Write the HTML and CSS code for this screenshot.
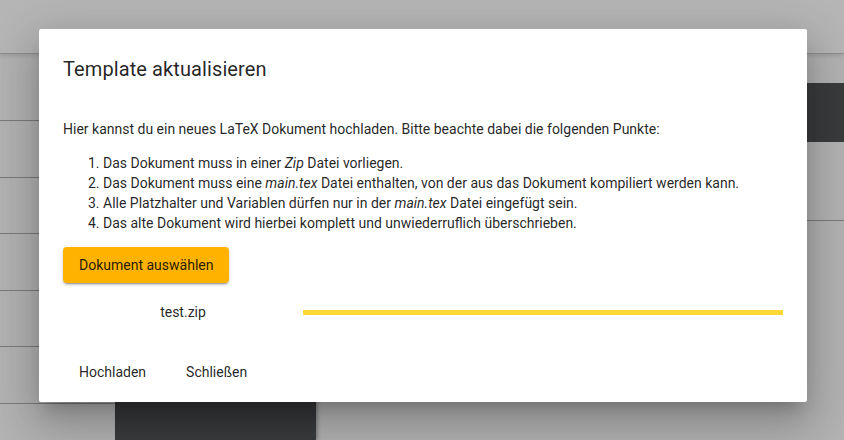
FILE: index.html
```html
<!DOCTYPE html>
<html lang="de">
<head>
<meta charset="utf-8">
<title>Template aktualisieren</title>
<link rel="stylesheet" href="styles.css">
</head>
<body>
<div class="app">
  <header class="toolbar"></header>
  <div class="main">
    <aside class="side">
      <div class="side-head"></div>
      <div class="side-row"></div>
      <div class="side-row"></div>
      <div class="side-row"></div>
      <div class="side-row"></div>
      <div class="side-row"></div>
    </aside>
    <section class="center">
      <div class="center-top"></div>
      <div class="center-dark"></div>
    </section>
    <section class="right">
      <div class="right-gap"></div>
      <div class="right-dark"></div>
      <div class="right-mid"></div>
    </section>
  </div>
</div>

<div class="backdrop">
  <div class="dialog" role="dialog">
    <h2 class="dialog-title">Template aktualisieren</h2>
    <div class="dialog-content">
      <p class="intro">Hier kannst du ein neues LaTeX Dokument hochladen. Bitte beachte dabei die folgenden Punkte:</p>
      <ol class="rules">
        <li>Das Dokument muss in einer <em>Zip</em> Datei vorliegen.</li>
        <li>Das Dokument muss eine <em>main.tex</em> Datei enthalten, von der aus das Dokument kompiliert werden kann.</li>
        <li>Alle Platzhalter und Variablen dürfen nur in der <em>main.tex</em> Datei eingefügt sein.</li>
        <li>Das alte Dokument wird hierbei komplett und unwiederruflich überschrieben.</li>
      </ol>
      <button class="btn-raised">Dokument auswählen</button>
      <div class="file-row">
        <span class="file-name">test.zip</span>
        <div class="progress"><div class="progress-fill"></div></div>
      </div>
    </div>
    <div class="dialog-actions">
      <button class="btn-flat">Hochladen</button>
      <button class="btn-flat">Schließen</button>
    </div>
  </div>
</div>
</body>
</html>
```
FILE: styles.css
```css
* { box-sizing: border-box; }
html, body { margin: 0; padding: 0; }
body {
  width: 844px;
  height: 440px;
  overflow: hidden;
  background: #b2b2b2;
  font-family: Roboto, "Liberation Sans", sans-serif;
  position: relative;
}

.app { display: flex; flex-direction: column; height: 440px; }
.toolbar {
  height: 54px;
  background: #b5b5b5;
  border-bottom: 1px solid #8e8e8e;
  box-shadow: 0 2px 4px rgba(0,0,0,0.12);
  flex: none;
}
.main { flex: 1; display: flex; }
.side { width: 115px; flex: none; }
.side-head { height: 67px; border-bottom: 1px solid #7a7a7a; }
.side-row { height: 56.5px; border-bottom: 1px solid #7a7a7a; }
.center { width: 201px; flex: none; display: flex; flex-direction: column; }
.center-top { height: 293px; }
.center-dark {
  flex: 1;
  background: linear-gradient(#292a2c, #3a3c3e);
  box-shadow: 2px 0 3px rgba(0,0,0,0.25);
}
.right { flex: 1; display: flex; flex-direction: column; }
.right-gap { height: 29px; }
.right-dark { height: 59px; background: #393b3d; }
.right-mid { height: 79px; border-bottom: 1px solid #7a7a7a; }

.backdrop {
  position: absolute;
  inset: 0;
}
.dialog {
  position: absolute;
  left: 39px;
  top: 29px;
  width: 768px;
  height: 373px;
  background: #fff;
  border-radius: 2px;
  padding: 24px 24px 12px;
  display: flex;
  flex-direction: column;
  color: rgba(0,0,0,0.87);
  box-shadow: 0 11px 15px -7px rgba(0,0,0,0.2), 0 24px 38px 3px rgba(0,0,0,0.14), 0 9px 46px 8px rgba(0,0,0,0.12);
}
.dialog-title {
  margin: 0 0 20px;
  font-size: 20px;
  font-weight: 400;
  line-height: 32px;
  letter-spacing: 0.1px;
}
.dialog-content { font-size: 14px; line-height: 20px; flex: 1; }
.intro { margin: 14px 0 14px; }
.rules { margin: 14px 0 14px; padding-left: 40px; }
.rules em { font-style: italic; }

.btn-raised {
  font: inherit;
  font-size: 14px;
  height: 36px;
  padding: 0 16px;
  border: none;
  border-radius: 4px;
  background: #ffb300;
  color: rgba(0,0,0,0.87);
  box-shadow: 0 3px 1px -2px rgba(0,0,0,0.2), 0 2px 2px 0 rgba(0,0,0,0.14), 0 1px 5px 0 rgba(0,0,0,0.12);
  display: block;
}
.file-row {
  margin-top: 16px;
  height: 26px;
  display: flex;
  align-items: center;
}
.file-name {
  width: 240px;
  text-align: center;
  font-size: 14px;
}
.progress { flex: 1; height: 5px; background: #fdd835; margin-top: 1px; }
.progress-fill { height: 100%; width: 100%; background: #fdd835; }

.dialog-actions { display: flex; gap: 8px; height: 36px; }
.btn-flat {
  font: inherit;
  font-size: 14px;
  height: 36px;
  padding: 0 16px;
  border: none;
  background: transparent;
  color: rgba(0,0,0,0.87);
  border-radius: 4px;
}
```
